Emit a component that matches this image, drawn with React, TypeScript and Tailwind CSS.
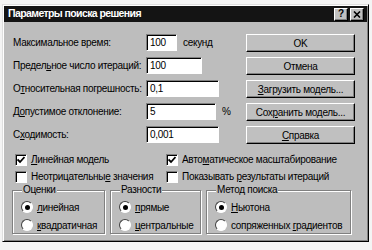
import React from 'react'

const font = { fontFamily: '"Liberation Sans", Arial, sans-serif' }

const raised =
  'border border-t-white border-l-white border-r-black border-b-black shadow-[inset_-1px_-1px_#808080]'
const sunken =
  'border border-t-[#808080] border-l-[#808080] border-r-white border-b-white shadow-[inset_1px_1px_#000]'

function U({ children }: { children: React.ReactNode }) {
  return <span className="underline underline-offset-1">{children}</span>
}

function Field({ label, value, width, unit }: { label: React.ReactNode; value: string; width: string; unit?: string }) {
  return (
    <div className="flex h-[23px] items-center">
      <div className="w-[133px] whitespace-nowrap">{label}</div>
      <div className={`${sunken} ${width} h-[17px] bg-white pl-[3px] leading-[15px]`}>{value}</div>
      {unit && <div className="ml-[6px]">{unit}</div>}
    </div>
  )
}

function Button({ children }: { children: React.ReactNode }) {
  return (
    <div className={`${raised} flex h-[18px] w-[109px] items-center justify-center bg-[#c0c0c0]`}>{children}</div>
  )
}

function Check({ checked, children }: { checked: boolean; children: React.ReactNode }) {
  return (
    <div className="flex h-[17px] items-center">
      <div className={`${sunken} mr-[4px] flex h-[12px] w-[12px] items-center justify-center bg-white`}>
        {checked && (
          <svg width="8" height="8" viewBox="0 0 8 8">
            <path d="M0.5 3.5 L3 6 L7.5 1" stroke="#000" strokeWidth="1.8" fill="none" />
          </svg>
        )}
      </div>
      <span className="whitespace-nowrap">{children}</span>
    </div>
  )
}

function Radio({ checked, children }: { checked: boolean; children: React.ReactNode }) {
  return (
    <div className="flex h-[18px] items-center">
      <div className="mr-[4px] flex h-[12px] w-[12px] items-center justify-center rounded-full border border-t-[#404040] border-l-[#404040] border-r-white border-b-white bg-white">
        {checked && <div className="h-[5px] w-[5px] rounded-full bg-black" />}
      </div>
      <span className="whitespace-nowrap">{children}</span>
    </div>
  )
}

function Group({ title, width, children }: { title: string; width: string; children: React.ReactNode }) {
  return (
    <fieldset className={`${width} h-[50px] border border-[#808080] pl-[8px] pt-[2px] shadow-[inset_1px_1px_#fff,1px_1px_#fff]`}>
      <legend className="ml-[1px] bg-[#bdbdbd] px-[1px] leading-[12px]">{title}</legend>
      {children}
    </fieldset>
  )
}

export default function App() {
  return (
    <div className="h-[250px] w-[372px] bg-[#f4f4f4] pl-[2px] pt-[4px] text-[10px] tracking-[-0.3px] text-black" style={font}>
      <div className="h-[238px] w-[367px] border border-t-[#dfdfdf] border-l-[#dfdfdf] border-r-black border-b-black bg-[#bdbdbd] p-[1px] shadow-[inset_1px_1px_#fff,inset_-1px_-1px_#808080]">
        <div className="flex h-[16px] items-center justify-between bg-[#141414] pl-[4px] pr-[3px]">
          <span className="text-[10.5px] font-bold tracking-[-0.6px] text-white">Параметры поиска решения</span>
          <div className="flex gap-[2px]">
            <div className={`${raised} flex h-[13px] w-[14px] items-center justify-center bg-[#c0c0c0] text-[10px] font-bold leading-none`}>?</div>
            <div className={`${raised} flex h-[13px] w-[14px] items-center justify-center bg-[#c0c0c0]`}>
              <svg width="8" height="7" viewBox="0 0 8 7">
                <path d="M1 0.5 L7 6.5 M7 0.5 L1 6.5" stroke="#000" strokeWidth="1.6" />
              </svg>
            </div>
          </div>
        </div>

        <div className="flex pl-[9px] pt-[9px]">
          <div className="w-[233px]">
            <Field label="Максимальное время:" value="100" width="w-[31px]" unit="секунд" />
            <Field label={<>Предел<U>ь</U>ное число итераций:</>} value="100" width="w-[56px]" />
            <Field label={<>О<U>т</U>носительная погрешность:</>} value="0,1" width="w-[73px]" />
            <Field label={<>Д<U>о</U>пустимое отклонение:</>} value="5" width="w-[70px]" unit="%" />
            <Field label={<>С<U>х</U>одимость:</>} value="0,001" width="w-[73px]" />
          </div>
          <div className="flex flex-col gap-[5px] pt-[3px]">
            <Button>OK</Button>
            <Button>Отмена</Button>
            <Button><U>З</U>агрузить модель...</Button>
            <Button>Сох<U>р</U>анить модель...</Button>
            <Button><U>С</U>правка</Button>
          </div>
        </div>

        <div className="mt-[5px] grid grid-cols-[151px_1fr] pl-[11px]">
          <Check checked><U>Л</U>инейная модель</Check>
          <Check checked>Авто<U>м</U>атическое масштабирование</Check>
          <Check checked={false}>Неотрицательны<U>е</U> значения</Check>
          <Check checked={false}>Показывать <U>р</U>езультаты итераций</Check>
        </div>

        <div className="mt-[-1px] flex gap-[5px] pl-[8px]">
          <Group title="Оценки" width="w-[93px]">
            <Radio checked><U>л</U>инейная</Radio>
            <Radio checked={false}><U>к</U>вадратичная</Radio>
          </Group>
          <Group title="Разности" width="w-[91px]">
            <Radio checked><U>п</U>рямые</Radio>
            <Radio checked={false}><U>ц</U>ентральные</Radio>
          </Group>
          <Group title="Метод поиска" width="w-[145px]">
            <Radio checked><U>Н</U>ьютона</Radio>
            <Radio checked={false}>сопряженных <U>г</U>радиентов</Radio>
          </Group>
        </div>
      </div>
    </div>
  )
}
